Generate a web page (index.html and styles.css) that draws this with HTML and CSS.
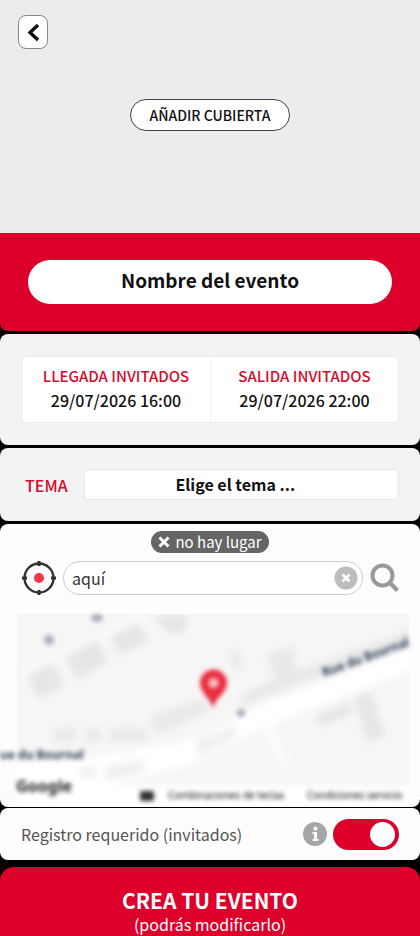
FILE: index.html
```html
<!DOCTYPE html>
<html lang="es">
<head>
<meta charset="utf-8">
<meta name="viewport" content="width=device-width, initial-scale=1">
<title>Crear evento</title>
<link rel="stylesheet" href="styles.css">
</head>
<body>
<form class="page">
  <header class="cover">
    <button class="back" type="button" aria-label="Volver">
      <svg width="28" height="32" viewBox="0 0 28 32"><path d="M19 9 11 16.500 19 24" fill="none" stroke="#0b0b0b" stroke-width="3.400"/></svg>
    </button>
    <button class="add-cover" type="button">AÑADIR CUBIERTA</button>
  </header>

  <section class="name">
    <input class="name-input" type="text" aria-label="Nombre del evento" value="Nombre del evento">
  </section>

  <section class="panel dates">
    <div class="dates-card">
      <button class="date" type="button"><span class="label">LLEGADA INVITADOS</span><span>29/07/2026 16:00</span></button>
      <button class="date" type="button"><span class="label">SALIDA INVITADOS</span><span>29/07/2026 22:00</span></button>
    </div>
  </section>

  <section class="panel theme">
    <label class="label" for="theme">TEMA</label>
    <select class="theme-select" id="theme"><option>Elige el tema ...</option></select>
  </section>

  <section class="panel place">
    <button class="no-place" type="button">
      <svg width="12" height="12" viewBox="0 0 12 12"><path d="m1.500 1.500 9 9m0-9-9 9" stroke="#fff" stroke-width="3"/></svg>
      no hay lugar
    </button>
    <div class="search">
      <button class="icon" type="button" aria-label="Mi ubicación">
        <svg width="34" height="34" viewBox="0 0 34 34"><circle cx="17" cy="17" r="14.500" fill="none" stroke="#303030" stroke-width="2.400"/><path d="M17 0v5M17 29v5M0 17h5M29 17h5" stroke="#303030" stroke-width="3"/><circle cx="17" cy="17" r="5" fill="#f5364a"/></svg>
      </button>
      <div class="field">
        <input class="place-input" type="text" aria-label="Lugar" value="aquí">
        <button class="icon" type="button" aria-label="Borrar">
          <svg width="24" height="24" viewBox="0 0 24 24"><circle cx="12" cy="12" r="11.500" fill="#bdbdbd"/><path d="m8.500 8.500 7 7m0-7-7 7" stroke="#fff" stroke-width="2.500"/></svg>
        </button>
      </div>
      <button class="icon" type="button" aria-label="Buscar">
        <svg width="30" height="30" viewBox="0 0 30 30"><circle cx="12.500" cy="12.500" r="10" fill="none" stroke="#999" stroke-width="4"/><path d="m19.500 19.500 8 8" stroke="#999" stroke-width="4.400"/></svg>
      </button>
    </div>
    <svg class="map" viewBox="0 0 420 200" preserveAspectRatio="xMidYMid slice" role="img" aria-label="Mapa">
      <defs>
        <filter id="soft" x="-20%" y="-20%" width="140%" height="140%"><feGaussianBlur stdDeviation="3.500"/></filter>
        <filter id="text" x="-20%" y="-60%" width="140%" height="220%"><feGaussianBlur stdDeviation="2.300"/></filter>
        <filter id="pin" x="-30%" y="-30%" width="160%" height="160%"><feGaussianBlur stdDeviation="2"/></filter>
        <clipPath id="area"><rect x="17" y="7" width="392" height="193"/></clipPath>
      </defs>
      <g clip-path="url(#area)">
        <rect x="17" y="7" width="392" height="193" fill="#f6f6f6"/>
        <g filter="url(#soft)">
          <path d="M0 156C90 153 135 145 200 130L260 98 420 38V60L270 118 200 154C130 176 70 182 110 208H0Z" fill="#fff"/>
          <path d="M266 115 286 160M17 182H420V206H17Z" fill="#fff" stroke="#fff" stroke-width="6"/>
          <path d="M17 68 57 51 72 43 98 31 110 26 143 8" fill="none" stroke="#fafafa" stroke-width="6"/>
          <g fill="#e6e6e6">
            <path d="m28 69 24-14 12 23-25 14ZM65 50l32-17 11 22-31 17ZM110 30l28-15 11 19-30 14ZM153 9h36l-6 18-15-2Z"/>
            <path d="m244 87 32-16-10-22 27-11 4 26 112-41v13l-101 38-72 27ZM229 46l9-3 5 17-8 3Z" opacity=".8"/>
            <path d="m316 108 33-12 3 11-32 12ZM354 91l17-6 14 43-17 8Z"/>
            <path d="M54 121h22v14H54ZM87 121h14v14H87ZM110 121h36v14H110ZM151 109l54-19 3 15-42 20-12 2Z" opacity=".75"/>
            <path d="M80 160h16v11H80ZM106 158l38-5v13l-38 8ZM197 133l40-15-2 13-38 20Z" opacity=".6"/>
          </g>
        </g>
      </g>
      <g class="map-text" filter="url(#text)">
        <text x="0" y="152" font-size="12" fill="#33445c">ue du Bournal</text>
        <text x="324" y="70" font-size="12" fill="#33445c" transform="rotate(-20 324 70)">Rue du Bournal</text>
        <text x="16" y="185" font-size="16" fill="#222">Google</text>
        <rect x="140" y="184" width="14" height="10" rx="2" fill="#333"/>
      </g>
      <g class="map-legal" filter="url(#text)" fill="#111">
        <text x="168" y="192">Combinaciones de teclas</text>
        <text x="307" y="192">Condiciones servicio</text>
      </g>
      <g filter="url(#text)" fill="#a8aec0"><circle cx="49" cy="33" r="5"/><ellipse cx="97" cy="11" rx="6" ry="4"/><circle cx="241" cy="106" r="4"/></g>
      <g filter="url(#pin)"><path d="M213 101C210 90 200 86 200 76a13.500 13.500 0 0 1 27 0c0 10-11 14-14 25Z" fill="#e92d41"/><circle cx="213.500" cy="76" r="4" fill="#ffc8cc"/></g>
    </svg>
  </section>

  <section class="panel register">
    <label class="register-label" for="register">Registro requerido (invitados)</label>
    <button class="icon" type="button" aria-label="Información">
      <svg width="24" height="24" viewBox="0 0 24 24"><circle cx="12" cy="12" r="12" fill="#a6a6a6"/><circle cx="12.500" cy="6.500" r="2" fill="#fff"/><path d="M9.500 10H14v7h1.500v2h-6v-2H11v-5H9.500Z" fill="#fff"/></svg>
    </button>
    <input class="switch" id="register" type="checkbox" role="switch" checked>
  </section>

  <button class="create" type="submit"><span class="create-title">CREA TU EVENTO</span><span class="create-note">(podrás modificarlo)</span></button>
</form>
</body>
</html>
```
FILE: styles.css
```css
* { box-sizing: border-box; }
body { margin: 0; background: #000; }
body, button, input, select { font-family: "Noto Sans CJK JP", "Noto Sans", sans-serif; color: #111; }
button { border: 0; padding: 0; background: none; }
svg { display: block; }
.page { display: flex; flex-direction: column; gap: 3px; min-height: 100vh; overflow: hidden; }

.cover { display: flex; flex-direction: column; align-items: center; height: 233px; padding: 15px 18px; background: #ececec; }
.back { align-self: flex-start; width: 30px; height: 34px; border: 1px solid #888; border-radius: 8px; background: #fff; }
.add-cover { height: 32px; margin-top: 50px; padding: 0 19px; border: 1px solid #444; border-radius: 16px; background: #fff; font-size: 14px; font-weight: 500; line-height: 20px; color: #111; }

.name { margin-top: -3px; padding: 27px 28px; background: #dc002b; border-radius: 0 0 8px 8px; }
.name-input { display: block; width: 100%; height: 44px; border: 0; border-radius: 22px; background: #fff; font-size: 19px; font-weight: 700; text-align: center; padding: 0 20px 6px; }

.panel { background: #f3f3f3; border-radius: 8px; }
.label { color: #d60b2d; font-weight: 500; }

.dates { padding: 22px 21px; }
.dates-card { display: grid; grid-template-columns: 1fr 1fr; border: 1px solid #ebebeb; border-radius: 5px; background: #fff; }
.date { display: flex; flex-direction: column; align-items: center; padding: 6px 0 9px; font-size: 16px; font-weight: 500; line-height: 25px; }
.date + .date { border-left: 1px solid #f3f3f3; }
.date .label { font-size: 15px; }

.theme { display: flex; align-items: center; gap: 16px; padding: 21px 21px 21px 25px; font-size: 16px; line-height: 20px; }
.theme-select { flex: 1; min-width: 0; height: 31px; padding: 0 12px 2px 0; border: 1px solid #e8e8e8; border-radius: 5px; background: #fff; appearance: none; font-size: 16px; font-weight: 700; text-align: center; text-align-last: center; }

.place { display: flex; flex-direction: column; align-items: center; padding-top: 7px; background: #fdfdfd; overflow: hidden; }
.no-place { display: flex; align-items: center; gap: 5px; height: 22px; padding: 0 7px; border-radius: 11px; background: #656565; color: #fff; font-size: 15px; line-height: 20px; }
.search { display: flex; align-items: center; gap: 7px; align-self: stretch; padding: 8px 20px 0 22px; }
.field { display: flex; align-items: center; flex: 1; min-width: 0; height: 34px; padding: 0 4px 0 8px; border: 1px solid #ccc; border-radius: 17px; background: #fff; }
.place-input { flex: 1; min-width: 0; border: 0; padding: 0; background: none; font-size: 16px; color: #333; }
.map { width: 100%; height: 200px; margin-top: 12px; }
.map-text { font-family: "Noto Sans", sans-serif; font-weight: 700; }
.map-legal { font-family: "Noto Sans", sans-serif; font-size: 10px; }

.register { display: flex; align-items: center; gap: 6px; min-height: 52px; margin-top: -2px; padding: 0 21px; background: #fdfdfd; }
.register-label { flex: 1; font-size: 16px; color: #555; }
.switch { appearance: none; display: flex; width: 66px; height: 31px; margin: 0; padding: 3px 4px; border-radius: 16px; background: #ccc; }
.switch::before { content: ""; width: 25px; height: 25px; border-radius: 50%; background: #fff; }
.switch:checked { justify-content: flex-end; background: #dc002b; }

.create { display: flex; flex-direction: column; align-items: center; flex: 1; margin-top: 4px; padding-top: 20px; border-radius: 14px 14px 0 0; background: #dc002b; color: #fff; }
.create-title { font-size: 21px; font-weight: 700; line-height: 26px; }
.create-note { font-size: 16px; line-height: 22px; }
```
